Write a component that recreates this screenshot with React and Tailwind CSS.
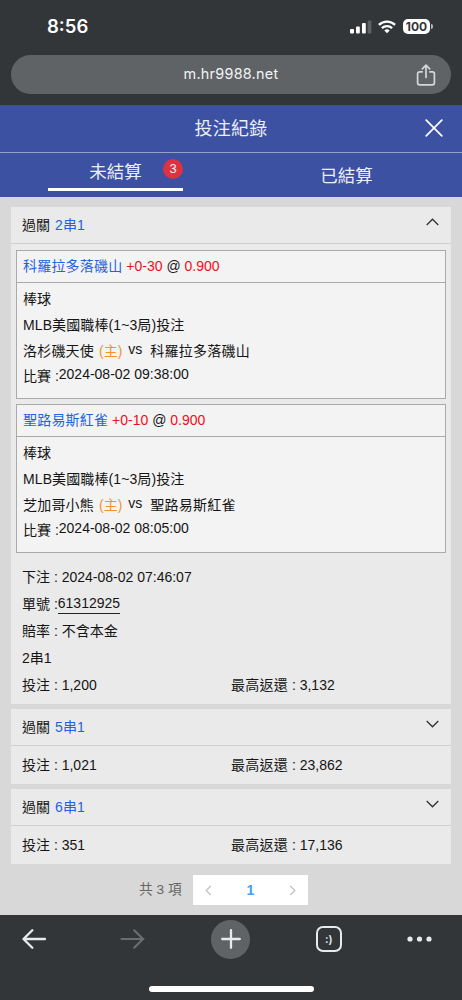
const legs = [
  {
    pick: "科羅拉多落磯山",
    handicap: "+0-30",
    odds: "0.900",
    home: "洛杉磯天使",
    away: "科羅拉多落磯山",
    time: "2024-08-02 09:38:00"
  },
  {
    pick: "聖路易斯紅雀",
    handicap: "+0-10",
    odds: "0.900",
    home: "芝加哥小熊",
    away: "聖路易斯紅雀",
    time: "2024-08-02 08:05:00"
  }
];

const closedBets = [
  { type: "5串1", stake: "1,021", payout: "23,862" },
  { type: "6串1", stake: "351", payout: "17,136" }
];

function StatusBar() {
  return (
    <div className="flex h-[55px] items-center justify-between pr-[29px] pb-[2px] pl-[47px] font-['Inter',sans-serif] text-white">
      <span className="text-[18.5px] leading-none font-semibold">8:56</span>
      <div className="flex items-center">
        <svg width="22" height="14" viewBox="0 0 22 14" className="mr-[6px]">
          <rect x="0" y="9" width="4" height="4.5" rx="1" fill="#fff" />
          <rect x="6" y="6.5" width="3.8" height="7" rx="1" fill="#fff" />
          <rect x="12" y="3" width="3.8" height="10.5" rx="1" fill="#fff" />
          <rect x="17.6" y="0.5" width="3.8" height="13" rx="1" fill="#5f6264" />
        </svg>
        <svg width="18" height="14" viewBox="0 0 18 14" fill="none" stroke="#fff" strokeWidth="2.3" className="mr-[7px]">
          <path d="M0.9 4.9a11.6 11.6 0 0 1 16.2 0" />
          <path d="M3.9 8.1a7.4 7.4 0 0 1 10.2 0" />
          <path d="M9 13.3 6.3 10.6a3.9 3.9 0 0 1 5.4 0Z" fill="#fff" stroke="none" />
        </svg>
        <span className="flex h-[15px] w-[27px] items-center justify-center rounded-[5px] bg-white pt-px text-[12px] leading-none font-bold text-[#333639]">
          100
        </span>
        <span className="ml-px h-[5px] w-[2px] rounded-r-full bg-[#b5b6b7]" />
      </div>
    </div>
  );
}

function AddressBar() {
  return (
    <div className="mx-[11px] grid h-[39px] grid-cols-[1fr_auto_1fr] items-center rounded-full bg-[#5f6366] text-[#f1f3f4]">
      <span />
      <span className="font-['Inter',sans-serif] text-[14.4px] leading-none tracking-[0.25px]">m.hr9988.net</span>
      <svg
        width="20"
        height="22"
        viewBox="0 0 20 22"
        fill="none"
        stroke="#d5d7d9"
        strokeWidth="1.7"
        strokeLinecap="round"
        strokeLinejoin="round"
        className="mr-[15px] justify-self-end"
      >
        <path d="M6.2 7.8H3.6a2 2 0 0 0-2 2v9a2 2 0 0 0 2 2h12.8a2 2 0 0 0 2-2v-9a2 2 0 0 0-2-2h-2.6" />
        <path d="M10 13.5V1.4M6.3 4.8 10 1.2l3.7 3.6" />
      </svg>
    </div>
  );
}

function Header() {
  return (
    <header className="bg-[#3c51a1] text-[#eceef6]">
      <div className="grid h-[48px] grid-cols-[1fr_auto_1fr] items-center border-b border-[#939ecb]">
        <span />
        <h1 className="text-[18px] leading-none tracking-[0.3px]">投注紀錄</h1>
        <svg
          width="18"
          height="18"
          viewBox="0 0 18 18"
          stroke="#fff"
          strokeWidth="1.7"
          strokeLinecap="round"
          className="mr-[19px] mb-[2px] justify-self-end"
        >
          <path d="M1.2 1.2 16.8 16.8M16.8 1.2 1.2 16.8" />
        </svg>
      </div>
      <nav className="grid h-[44px] grid-cols-2 text-[17.5px]">
        <div className="relative mr-[48px] ml-[48px] mb-[6px] flex items-center justify-center border-b-[3px] border-white pt-[4px]">
          <span>未結算</span>
          <span className="absolute top-[6px] right-0 flex size-5 items-center justify-center rounded-full bg-[#dc3340] pb-px text-[13px] leading-none">
            3
          </span>
        </div>
        <div className="flex items-center justify-center pt-[2px]">已結算</div>
      </nav>
    </header>
  );
}

function Chevron({ open }) {
  return (
    <svg width="13" height="8" viewBox="0 0 13 8" fill="none" stroke="#333" strokeWidth="1.3" className="mb-[7px]">
      <path d={open ? "M0.7 7 6.5 1.2 12.3 7" : "M0.7 1 6.5 6.8 12.3 1"} />
    </svg>
  );
}

function CardHeader({ type, open }) {
  return (
    <div className="flex h-[37px] items-center justify-between border-b border-[#cfcfcf] pr-[12px] pl-[11px]">
      <span className="pt-px">
        過關 <span className="ml-px tracking-[0.2px] text-[#1f63e0]">{type}</span>
      </span>
      <Chevron open={open} />
    </div>
  );
}

function Totals({ stake, payout }) {
  return (
    <div className="grid grid-cols-2 leading-[27px]">
      <span className="pl-[11px]">投注 : {stake}</span>
      <span>
        <span className="tracking-[0.25px]">最高返還</span> : {payout}
      </span>
    </div>
  );
}

function Leg({ leg }) {
  return (
    <div className="h-[149px] border border-[#aaa] bg-[#f3f3f3]">
      <div className="h-[32px] border-b border-[#aaa] pl-[6px] leading-[31px]">
        <span className="tracking-[0.2px] text-[#1f63e0]">{leg.pick}</span>{" "}
        <span className="text-[#ee0f18]">{leg.handicap}</span> @ <span className="text-[#ee0f18]">{leg.odds}</span>
      </div>
      <div className="pt-[3px] pl-[6px] leading-[26px]">
        <p>棒球</p>
        <p className="tracking-[0.1px]">MLB美國職棒(1~3局)投注</p>
        <p className="flex">
          <span className="tracking-[0.2px]">{leg.home}</span>
          <span className="ml-[5px] text-[#f7931e]">(主)</span>
          <span className="-mt-[2px] ml-[6px]">vs</span>
          <span className="ml-[8px] tracking-[0.25px]">{leg.away}</span>
        </p>
        <p className="-mt-px flex">
          <span>比賽 :</span>
          <span className="-mt-[2px]">{leg.time}</span>
        </p>
      </div>
    </div>
  );
}

function OpenBet() {
  return (
    <section className="h-[497px] bg-[#eaeaea]">
      <CardHeader type="2串1" open />
      <div className="flex flex-col gap-[5px] px-[5px] pt-[6px]">
        {legs.map((leg) => (
          <Leg key={leg.time} leg={leg} />
        ))}
      </div>
      <div className="pt-[11px] leading-[27px]">
        <p className="pl-[11px]">下注 : 2024-08-02 07:46:07</p>
        <p className="flex h-[27px] pl-[11px]">
          <span>單號 :</span>
          <span className="mt-[4px] h-[19px] border-b border-[#222] leading-[17px]">61312925</span>
        </p>
        <p className="pl-[11px]">賠率 : 不含本金</p>
        <p className="pl-[11px]">2串1</p>
        <Totals stake="1,200" payout="3,132" />
      </div>
    </section>
  );
}

function Pager() {
  return (
    <div className="mt-[11px] ml-[139px] flex h-[30px] items-center text-[#666]">
      <span className="w-[54px] text-[13.7px]">共 3 項</span>
      <div className="flex h-[30px] w-[115px] items-center justify-between bg-white px-[12px]">
        <svg width="7" height="11" viewBox="0 0 7 11" fill="none" stroke="#c5c5c5" strokeWidth="1.4">
          <path d="M5.8 1 1.2 5.5 5.8 10" />
        </svg>
        <span className="font-bold text-[#409eff]">1</span>
        <svg width="7" height="11" viewBox="0 0 7 11" fill="none" stroke="#c5c5c5" strokeWidth="1.4">
          <path d="M1.2 1 5.8 5.5 1.2 10" />
        </svg>
      </div>
    </div>
  );
}

function BottomBar() {
  return (
    <footer className="flex h-[85px] flex-col bg-[#333639]">
      <div className="grid h-[48px] grid-cols-5 items-center justify-items-center">
        <svg width="25" height="20" viewBox="0 0 25 20" fill="none" stroke="#e8eaed" strokeWidth="2.3" strokeLinecap="round" strokeLinejoin="round" className="mr-[24px]">
          <path d="M23 10H1.6M10.3 1.3 1.5 10l8.8 8.7" />
        </svg>
        <svg width="25" height="20" viewBox="0 0 25 20" fill="none" stroke="#6b6e71" strokeWidth="2.1" strokeLinecap="round" strokeLinejoin="round" className="mr-[12px]">
          <path d="M1.5 10h22M14.2 1.3 23 10l-8.8 8.7" />
        </svg>
        <span className="flex size-[39px] items-center justify-center rounded-full bg-[#5f6366]">
          <svg width="20" height="20" viewBox="0 0 20 20" stroke="#e8eaed" strokeWidth="2.3" strokeLinecap="round">
            <path d="M10 1.2v17.6M1.2 10h17.6" />
          </svg>
        </span>
        <span className="ml-[11px] flex size-[26px] items-center justify-center rounded-[7px] border-2 border-[#e8eaed] font-['Inter',sans-serif] text-[11px] leading-none font-semibold text-[#e8eaed]">
          :)
        </span>
        <svg width="25" height="6" viewBox="0 0 25 6" fill="#e8eaed" className="ml-[8px]">
          <circle cx="3" cy="3" r="2.6" />
          <circle cx="12.5" cy="3" r="2.6" />
          <circle cx="22" cy="3" r="2.6" />
        </svg>
      </div>
      <span className="mt-[23px] h-[6px] w-[165px] self-center rounded-full bg-white" />
    </footer>
  );
}

export default function App() {
  return (
    <div className="flex h-[1000px] w-[462px] flex-col overflow-hidden bg-[#d8d8d8] font-['Liberation_Sans','Noto_Sans_CJK_TC',sans-serif] text-[14px] text-[#151515]">
      <div className="h-[105px] bg-[#333639]">
        <StatusBar />
        <AddressBar />
      </div>
      <Header />
      <main className="h-[718px] pt-[10px]">
        <div className="mx-[11px] flex flex-col gap-[5px]">
          <OpenBet />
          {closedBets.map((bet) => (
            <section key={bet.type} className="h-[75px] bg-[#eaeaea]">
              <CardHeader type={bet.type} />
              <div className="pt-[6px]">
                <Totals stake={bet.stake} payout={bet.payout} />
              </div>
            </section>
          ))}
        </div>
        <Pager />
      </main>
      <BottomBar />
    </div>
  );
}
